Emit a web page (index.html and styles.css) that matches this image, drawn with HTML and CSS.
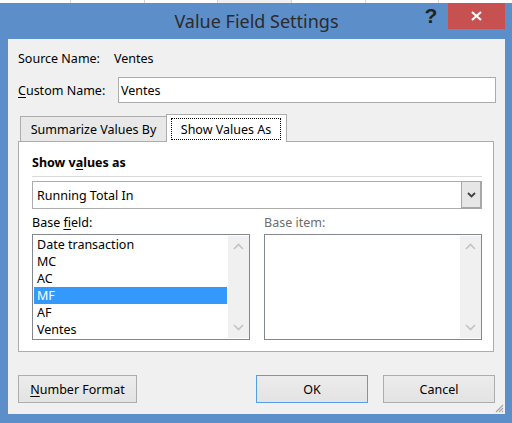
FILE: index.html
```html
<!DOCTYPE html>
<html>
<head>
<meta charset="utf-8">
<link rel="stylesheet" href="styles.css">
</head>
<body>
<div class="behind">
  <span class="cell"></span><span class="cell"></span><span class="cell shade"></span><span class="cell"></span><span class="cell"></span><span class="cell"></span>
</div>
<div class="window">
  <div class="titlebar">
    <div class="title">Value Field Settings</div>
    <div class="controls">
      <div class="help">?</div>
      <div class="close">
        <svg width="11" height="10" viewBox="0 0 11 10"><path d="M1 1 L10 9 M10 1 L1 9" stroke="#fff" stroke-width="2.2" fill="none"/></svg>
      </div>
    </div>
  </div>
  <div class="client">
    <div class="row source"><span class="lbl">Source Name:</span><span class="val">Ventes</span></div>
    <div class="row custom"><span class="lbl"><u>C</u>ustom Name:</span><div class="input">Ventes</div></div>
    <div class="tabs">
      <div class="tab">Summarize Values By</div>
      <div class="tab active"><span class="focus">Show Values As</span></div>
    </div>
    <div class="panel">
      <div class="heading">Show v<u>a</u>lues as</div>
      <div class="sep"></div>
      <div class="combo">
        <div class="combo-text">Running Total In</div>
        <div class="combo-btn">
          <svg width="9" height="6" viewBox="0 0 9 6"><path d="M1 1 L4.5 4.5 L8 1" stroke="#404040" stroke-width="1.8" fill="none"/></svg>
        </div>
      </div>
      <div class="lists">
        <div class="col">
          <div class="lab">Base <u>f</u>ield:</div>
          <div class="listbox">
            <div class="items">
              <div class="item">Date transaction</div>
              <div class="item">MC</div>
              <div class="item">AC</div>
              <div class="item sel">MF</div>
              <div class="item">AF</div>
              <div class="item">Ventes</div>
            </div>
            <div class="sbar">
              <svg width="11" height="7" viewBox="0 0 11 7"><path d="M1 6 L5.5 1.5 L10 6" stroke="#c3c3c3" stroke-width="1.6" fill="none"/></svg>
              <svg width="11" height="7" viewBox="0 0 11 7"><path d="M1 1 L5.5 5.5 L10 1" stroke="#c3c3c3" stroke-width="1.6" fill="none"/></svg>
            </div>
          </div>
        </div>
        <div class="col">
          <div class="lab disabled">Base item:</div>
          <div class="listbox">
            <div class="items"></div>
            <div class="sbar">
              <svg width="11" height="7" viewBox="0 0 11 7"><path d="M1 6 L5.5 1.5 L10 6" stroke="#c3c3c3" stroke-width="1.6" fill="none"/></svg>
              <svg width="11" height="7" viewBox="0 0 11 7"><path d="M1 1 L5.5 5.5 L10 1" stroke="#c3c3c3" stroke-width="1.6" fill="none"/></svg>
            </div>
          </div>
        </div>
      </div>
    </div>
    <div class="buttons">
      <div class="btn numfmt"><u>N</u>umber Format</div>
      <div class="spacer"></div>
      <div class="btn ok">OK</div>
      <div class="btn cancel">Cancel</div>
    </div>
    <svg class="grip" width="10" height="10" viewBox="0 0 10 10">
      <path d="M9 2 L2 9 M9 5 L5 9 M9 8 L8 9" stroke="#a8a8a8" stroke-width="1.2" fill="none"/>
    </svg>
  </div>
</div>
</body>
</html>
```

FILE: styles.css
```css
* { box-sizing: border-box; }
html, body { margin: 0; padding: 0; }
body {
  width: 512px;
  height: 423px;
  overflow: hidden;
  font-family: "Noto Sans", "Open Sans", sans-serif;
  font-size: 12.5px;
  color: #000;
  background: #fff;
}
u { text-decoration: underline; text-underline-offset: 2px; }

.behind {
  display: flex;
  height: 3px;
  background: #fff;
  padding-left: 70px;
}
.behind .cell {
  width: 95px;
  border-left: 1px solid #d4d4d4;
}
.behind .shade { background: #f0f0f0; }

.window {
  background: #5c8fca;
  padding: 0 7px 9px 8px;
  height: 420px;
}
.titlebar {
  display: grid;
  height: 36px;
}
.title, .controls { grid-area: 1 / 1; }
.title {
  text-align: center;
  font-family: "Noto Sans", sans-serif;
  font-size: 18px;
  line-height: 26px;
  padding-top: 5px;
  color: #2b2b2b;
}
.controls {
  justify-self: end;
  align-self: start;
  display: flex;
}
.help {
  width: 24px;
  margin-right: 5px;
  text-align: center;
  font-family: "Liberation Sans", sans-serif;
  font-weight: bold;
  font-size: 21px;
  line-height: 26px;
  color: #222;
}
.close {
  width: 57px;
  height: 26px;
  background: #c75050;
  display: flex;
  align-items: center;
  justify-content: center;
  padding-bottom: 1px;
}
.close svg { display: block; }

.client {
  position: relative;
  background: #f0f0f0;
  height: 375px;
  padding: 12px 9px 0 10px;
}
.row { display: flex; align-items: center; line-height: 16px; }
.lbl { width: 100px; }
.source .lbl { width: 96px; }
.custom { margin-top: 10px; height: 26px; }
.custom .lbl { padding-top: 2px; }
.input {
  flex: 1;
  height: 26px;
  background: #fff;
  border: 1px solid #acacac;
  padding: 1px 0 0 2px;
  line-height: 23px;
}

.tabs {
  display: flex;
  align-items: flex-end;
  margin-top: 11px;
  padding-left: 2px;
  height: 27px;
}
.tab {
  width: 146px;
  height: 25px;
  background: #e8e8e8;
  border-top: 1px solid #acacac;
  border-left: 1px solid #acacac;
  padding-top: 2px;
  line-height: 22px;
  text-align: center;
}
.tab.active {
  position: relative;
  z-index: 1;
  width: 121px;
  height: 28px;
  margin-bottom: -1px;
  background: #fff;
  border-right: 1px solid #acacac;
  padding: 3px 5px 0 4px;
}
.focus {
  display: block;
  height: 22px;
  border: 1px dotted #000;
  padding-top: 1px;
  line-height: 19px;
  text-align: center;
}

.panel {
  width: 476px;
  height: 211px;
  background: #fff;
  border: 1px solid #acacac;
  padding: 13px 0 0 13px;
}
.heading {
  font-weight: bold;
  line-height: 16px;
}
.sep {
  width: 450px;
  height: 1px;
  background: #dadada;
  margin-top: 5px;
}
.combo {
  display: flex;
  width: 450px;
  height: 28px;
  margin-top: 4px;
  border: 1px solid #acacac;
  background: #fff;
}
.combo-text {
  flex: 1;
  padding: 1px 0 0 4px;
  line-height: 25px;
}
.combo-btn {
  width: 21px;
  background: #e6e6e6;
  border: 1px solid #a7a7a7;
  margin: -1px -1px -1px 0;
  border-width: 1px 2px 2px 1px;
  display: flex;
  align-items: center;
  justify-content: center;
}
.combo-btn svg { display: block; }

.lists {
  display: flex;
  gap: 14px;
  margin-top: 6px;
}
.col { width: 218px; }
.lab { line-height: 16px; }
.lab.disabled { color: #6d6d6d; }
.listbox {
  display: flex;
  margin-top: 3px;
  height: 106px;
  border: 1px solid #828790;
  background: #fff;
  padding: 1px 0 1px 1px;
}
.items { flex: 1; }
.item {
  height: 17px;
  padding: 1px 0 0 3px;
  line-height: 16px;
}
.item.sel { background: #3399ff; color: #fff; }
.sbar {
  width: 21px;
  margin-left: 1px;
  background: #f0f0f0;
  display: flex;
  flex-direction: column;
  justify-content: space-between;
  align-items: center;
  padding: 7px 0 7px 0;
}
.sbar svg { display: block; }

.buttons {
  display: flex;
  margin-top: 23px;
  width: 477px;
}
.spacer { flex: 1; }
.btn {
  height: 28px;
  border: 1px solid #adadad;
  background: linear-gradient(#ececec, #e3e3e3);
  text-align: center;
  line-height: 24px;
  padding-top: 2px;
}
.numfmt { width: 119px; }
.ok { width: 112px; border-color: #569de5; }
.cancel { width: 112px; margin-left: 15px; }

.grip {
  position: absolute;
  right: 1px;
  bottom: 1px;
}
```
